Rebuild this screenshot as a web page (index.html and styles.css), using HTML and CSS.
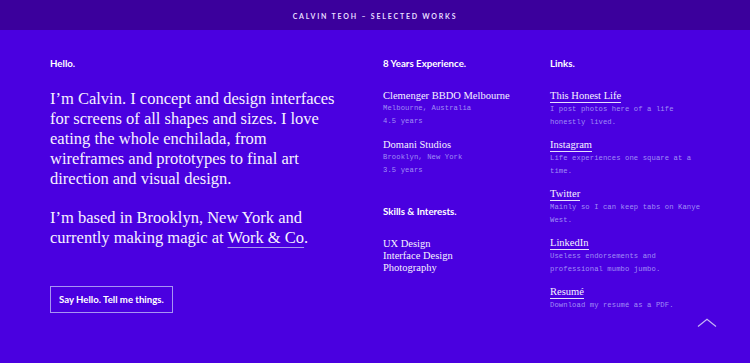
FILE: index.html
```html
<!DOCTYPE html>
<html>
<head>
<meta charset="utf-8">
<link rel="stylesheet" href="styles.css">
</head>
<body>
<header class="topbar">Calvin Teoh – Selected Works</header>
<main class="page">
  <section class="intro">
    <h2 class="label">Hello.</h2>
    <p class="lead">I’m Calvin. I concept and design interfaces for screens of all shapes and sizes. I love eating the whole enchilada, from wireframes and prototypes to final art direction and visual design.</p>
    <p class="lead">I’m based in Brooklyn, New York and currently making magic at <a class="work" href="#">Work &amp; Co</a>.</p>
    <a class="cta" href="#">Say Hello. Tell me things.</a>
  </section>
  <section class="exp">
    <h2 class="label">8 Years Experience.</h2>
    <div class="job">
      <div class="serif">Clemenger BBDO Melbourne</div>
      <div class="mono">Melbourne, Australia</div>
      <div class="mono">4.5 years</div>
    </div>
    <div class="job">
      <div class="serif">Domani Studios</div>
      <div class="mono">Brooklyn, New York</div>
      <div class="mono">3.5 years</div>
    </div>
    <h2 class="label skills-label">Skills &amp; Interests.</h2>
    <ul class="skills">
      <li>UX Design</li>
      <li>Interface Design</li>
      <li>Photography</li>
    </ul>
  </section>
  <section class="links">
    <h2 class="label">Links.</h2>
    <div class="link-list">
      <div class="link"><a href="#">This Honest Life</a><p class="mono">I post photos here of a life honestly lived.</p></div>
      <div class="link"><a href="#">Instagram</a><p class="mono">Life experiences one square at a time.</p></div>
      <div class="link"><a href="#">Twitter</a><p class="mono">Mainly so I can keep tabs on Kanye West.</p></div>
      <div class="link"><a href="#">LinkedIn</a><p class="mono">Useless endorsements and professional mumbo jumbo.</p></div>
      <div class="link"><a href="#">Resumé</a><p class="mono">Download my resumé as a PDF.</p></div>
    </div>
  </section>
  <a class="totop" href="#" aria-label="Back to top">
    <svg width="20" height="10" viewBox="0 0 20 10"><polyline points="1,8.5 10,1.2 19,8.5" fill="none" stroke="#c4b4f4" stroke-width="1.2"/></svg>
  </a>
</main>
</body>
</html>
```

FILE: styles.css
```css
* { box-sizing: border-box; }
html, body { margin: 0; padding: 0; }
body {
  background: #4a00e0;
  color: #f4f0ff;
  width: 750px;
  height: 363px;
  overflow: hidden;
  font-family: "Liberation Serif", serif;
}
.topbar {
  height: 30px;
  background: #3b009c;
  color: #e6dcff;
  font-family: "Lato", "Liberation Sans", sans-serif;
  font-weight: 700;
  font-size: 7px;
  letter-spacing: 1.8px;
  text-transform: uppercase;
  display: flex;
  align-items: center;
  justify-content: center;
  padding-top: 2px;
}
.page {
  position: relative;
  display: flex;
  padding: 27px 0 0 50px;
  height: 333px;
}
.label {
  margin: 0;
  font-family: "Lato", "Liberation Sans", sans-serif;
  font-weight: 700;
  font-size: 9.7px;
  line-height: 12px;
  color: #fff;
}
.intro { width: 333px; }
.lead {
  margin: 19.5px 0 0;
  font-size: 16.5px;
  line-height: 20px;
  width: 292px;
  color: #f6f2ff;
}
.lead + .lead { margin-top: 19.5px; }
.work {
  color: inherit;
  text-decoration: underline;
  text-decoration-color: #a896f2;
  text-decoration-thickness: 1px;
  text-underline-offset: 4px;
}
.cta {
  display: flex;
  width: fit-content;
  align-items: center;
  margin-top: 38px;
  height: 27px;
  padding: 0 8px;
  border: 1px solid #a794f3;
  color: #fff;
  text-decoration: none;
  font-family: "Lato", "Liberation Sans", sans-serif;
  font-weight: 700;
  font-size: 9.6px;
}
.exp { width: 167px; }
.job { margin-top: 21px; }
.job + .job { margin-top: 12px; }
.serif, .skills li, .link a {
  font-size: 10.5px;
  line-height: 12px;
  color: #f6f2ff;
}
.mono {
  font-family: "Liberation Mono", monospace;
  font-size: 7.2px;
  letter-spacing: 0.1px;
  line-height: 12.6px;
  color: #a08ef6;
  margin: 0;
}
.skills-label { margin-top: 29px; }
.skills {
  list-style: none;
  margin: 21px 0 0;
  padding: 0;
}
.links { width: 160px; }
.link-list {
  display: flex;
  flex-direction: column;
  margin-top: 21px;
}
.link {
  height: 49px;
  display: flex;
  flex-direction: column;
  align-items: flex-start;
}
.link a {
  display: block;
  text-decoration: none;
  border-bottom: 1px solid #e8e0ff;
}
.totop {
  position: absolute;
  left: 697px;
  top: 288px;
  line-height: 0;
}
```
